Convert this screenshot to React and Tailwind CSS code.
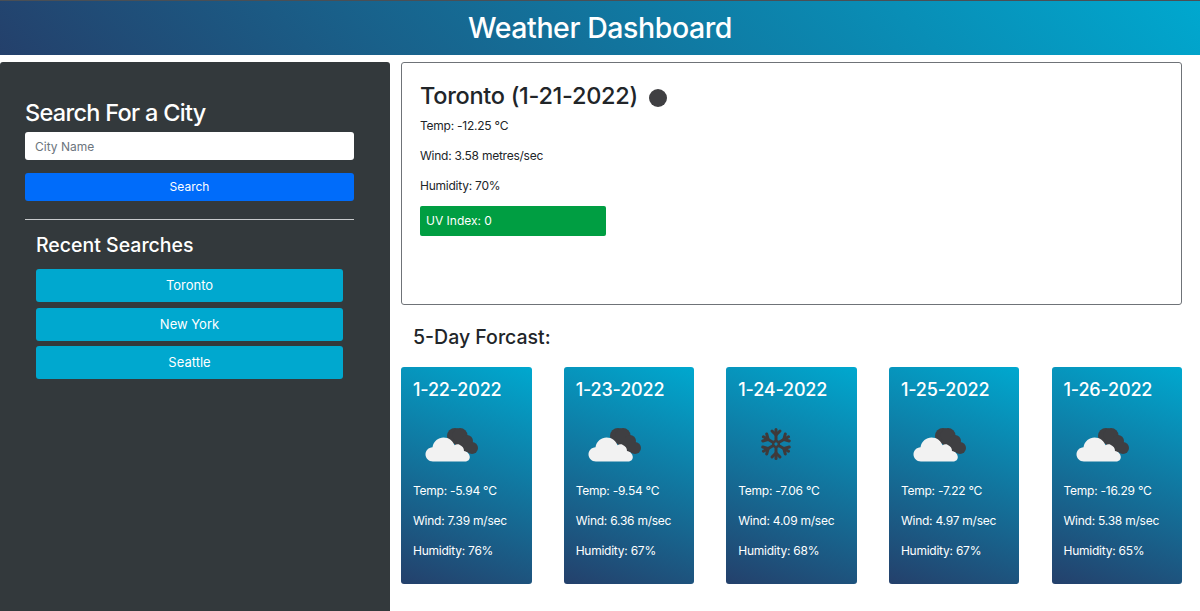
const forecast = [
    { date: "1-22-2022", icon: "cloud", temp: "-5.94", wind: "7.39", humidity: "76" },
    { date: "1-23-2022", icon: "cloud", temp: "-9.54", wind: "6.36", humidity: "67" },
    { date: "1-24-2022", icon: "snow", temp: "-7.06", wind: "4.09", humidity: "68" },
    { date: "1-25-2022", icon: "cloud", temp: "-7.22", wind: "4.97", humidity: "67" },
    { date: "1-26-2022", icon: "cloud", temp: "-16.29", wind: "5.38", humidity: "65" },
];

const recent = ["Toronto", "New York", "Seattle"];

function CloudIcon() {
    return (
        <svg width="54" height="36" viewBox="0 0 54 36" className="block">
            <g fill="#3f3f42">
                <circle cx="30" cy="9" r="8" />
                <circle cx="35" cy="8.5" r="7.5" />
                <circle cx="42" cy="14" r="6" />
                <circle cx="47" cy="21" r="6" />
                <rect x="30" y="12" width="16" height="13" />
            </g>
            <path
                d="M8 34.5 C3.5 34.5 0.5 31 0.5 27.5 C0.5 23.5 3.5 20.5 7.5 20.3 C8.5 14 13.5 10.5 18.5 10.5 C24 10.5 28 14 29.5 18.3 C31 17.3 33 17 34.5 17.8 C37.5 19 39 21.5 39 24 C42 24.5 44.8 27 44.8 30 C44.8 33 42.5 34.5 40 34.5 Z"
                fill="#f2f2f2"
            />
        </svg>
    );
}

function SnowIcon() {
    const arms = [0, 60, 120, 180, 240, 300];
    return (
        <svg width="30" height="32" viewBox="-15 -16 30 32" className="block">
            <g stroke="#3f3a3a" strokeWidth="3" fill="none" strokeLinecap="round">
                {arms.map((angle) => (
                    <g key={angle} transform={`rotate(${angle})`}>
                        <path d="M0 -3 V-14.5" />
                        <path d="M-4 -13 L0 -9 L4 -13" />
                    </g>
                ))}
                <circle cx="0" cy="0" r="3" strokeWidth="2" />
            </g>
        </svg>
    );
}

function ForecastCard({ day }) {
    return (
        <div className="w-[130.5px] h-[217px] rounded-[3px] bg-[linear-gradient(200deg,#00a8cf_0%,#24406b_100%)] text-white px-3 pt-[12px]">
            <h5 className="text-[18px] leading-[22px] font-medium tracking-[-0.01em]">{day.date}</h5>
            <div className="h-[61px] mt-[4px] flex items-center">
                {day.icon === "cloud" ? (
                    <div className="ml-[12px] mt-[18px]">
                        <CloudIcon />
                    </div>
                ) : (
                    <div className="ml-[23px] mt-[16px]">
                        <SnowIcon />
                    </div>
                )}
            </div>
            <div className="flex flex-col gap-[12px] mt-[16px] text-[12px] leading-[18px] tracking-[-0.02em]">
                <p>Temp: {day.temp} °C</p>
                <p>Wind: {day.wind} m/sec</p>
                <p>Humidity: {day.humidity}%</p>
            </div>
        </div>
    );
}

export default function App() {
    return (
        <div className="h-[611px] overflow-hidden bg-white font-['Inter','Liberation_Sans',sans-serif] text-[#212529]">
            <header className="h-[55px] border-t border-[#4a4f55] bg-[linear-gradient(45deg,#24406b_0%,#00a8cf_100%)] flex items-center justify-center">
                <h1 className="text-[28.5px] font-medium text-white tracking-[-0.015em]">Weather Dashboard</h1>
            </header>

            <div className="flex mt-[7px] h-[549px]">
                <aside className="w-[390px] shrink-0 bg-[#33393c] rounded-t-[3px] text-white pl-[25px] pr-[36px] pt-[37px]">
                    <h2 className="text-[23.5px] leading-[28px] font-medium tracking-[-0.03em]">Search For a City</h2>
                    <input
                        type="text"
                        placeholder="City Name"
                        className="block w-full h-[28px] mt-[5px] bg-white rounded-[3px] px-[10px] text-[12px] text-[#212529] placeholder:text-[#6c757d] outline-none"
                    />
                    <button className="block w-full h-[28px] mt-[13px] bg-[#006cfa] rounded-[3px] text-[12px] text-white">
                        Search
                    </button>
                    <hr className="mt-[18px] border-t border-[#c8cacc]" />
                    <div className="px-[11px] mt-[13px]">
                        <h3 className="text-[19.5px] leading-[24px] font-medium">Recent Searches</h3>
                        <div className="flex flex-col gap-[5.5px] mt-[12px]">
                            {recent.map((city) => (
                                <button
                                    key={city}
                                    className="h-[33px] pt-[1px] bg-[#00a8cf] rounded-[3px] text-[13px] text-white"
                                >
                                    {city}
                                </button>
                            ))}
                        </div>
                    </div>
                </aside>

                <main className="flex-1 pl-[11px] pr-[18px]">
                    <section className="h-[243px] border border-[#6f7378] rounded-[3px] px-[18px] pt-[19px]">
                        <div className="flex items-center h-[28px]">
                            <h2 className="text-[23.5px] font-medium text-[#212529] tracking-[-0.012em]">Toronto (1-21-2022)</h2>
                            <span className="w-[18px] h-[18px] rounded-full bg-[#3f3f42] ml-[11px] mt-[3px]" />
                        </div>
                        <div className="flex flex-col gap-[12px] mt-[7px] text-[12px] leading-[18px] tracking-[-0.02em]">
                            <p>Temp: -12.25 °C</p>
                            <p>Wind: 3.58 metres/sec</p>
                            <p>Humidity: 70%</p>
                        </div>
                        <div className="w-[186px] h-[30px] mt-[11px] bg-[#009e42] rounded-[2px] text-white text-[12px] leading-[30px] px-[6px]">
                            UV Index: 0
                        </div>
                    </section>

                    <h3 className="text-[19.5px] leading-[24px] font-medium mt-[20px] ml-[12px]">5-Day Forcast:</h3>

                    <div className="flex justify-between mt-[18px]">
                        {forecast.map((day) => (
                            <ForecastCard key={day.date} day={day} />
                        ))}
                    </div>
                </main>
            </div>
        </div>
    );
}
